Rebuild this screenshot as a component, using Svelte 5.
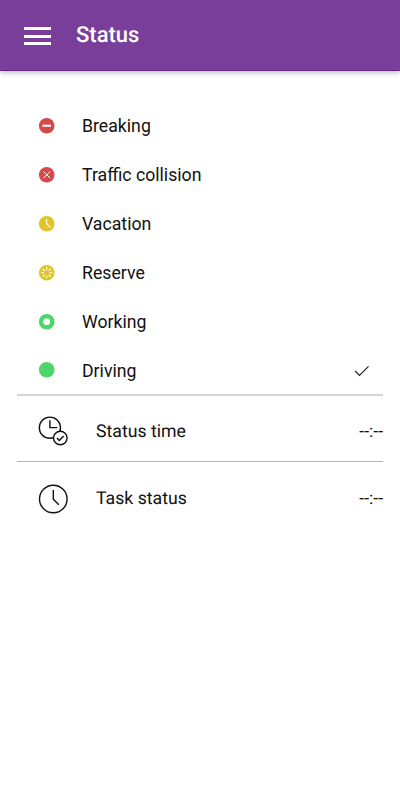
<script>
  // Available statuses
  const statuses = [
    { id: 'breaking', label: 'Breaking', color: '#d34a4b' },
    { id: 'collision', label: 'Traffic collision', color: '#d34a4b' },
    { id: 'vacation', label: 'Vacation', color: '#e0c527' },
    { id: 'reserve', label: 'Reserve', color: '#e0c527' },
    { id: 'working', label: 'Working', color: '#4bd667' },
    { id: 'driving', label: 'Driving', color: '#4bd667' }
  ];

  const rays = [0, 45, 90, 135, 180, 225, 270, 315];

  let selected = $state('driving');
  let statusTime = $state('--:--');
  let taskStatus = $state('--:--');
</script>

<div class="screen">
  <header class="app-bar">
    <button class="menu-button" aria-label="Menu">
      <span class="bar"></span>
      <span class="bar"></span>
      <span class="bar"></span>
    </button>
    <h1 class="title">Status</h1>
  </header>

  <main class="content">
    <div class="status-list">
      {#each statuses as status (status.id)}
        <button class="status-row" onclick={() => (selected = status.id)}>
          <svg class="dot" viewBox="0 0 16 16">
            <circle cx="7.7" cy="7.7" r="7.8" fill={status.color} />
            {#if status.id === 'breaking'}
              <path d="M3.4 7.7h8.6" stroke-width="2" />
            {:else if status.id === 'collision'}
              <path d="M4.5 4.5l6.6 6.6M11.1 4.5l-6.6 6.6" stroke-width="1" />
            {:else if status.id === 'vacation'}
              <path d="M7.6 2.7v5l4 4" stroke-width="1.1" />
            {:else if status.id === 'reserve'}
              {#each rays as angle}
                <path d="M7.7 2.1v2.9" stroke-width="1.1" transform="rotate({angle} 7.7 7.7)" />
              {/each}
            {:else if status.id === 'working'}
              <circle cx="7.7" cy="7.7" r="3.4" fill="#fff" />
            {/if}
          </svg>
          <span class="label">{status.label}</span>
          {#if selected === status.id}
            <svg class="check" viewBox="0 0 16 12">
              <path d="M1.2 6l4.3 4.4 9-9" />
            </svg>
          {/if}
        </button>
      {/each}
    </div>

    <div class="info-row thick">
      <svg class="info-icon" viewBox="0 0 30 30">
        <circle cx="11.9" cy="11.7" r="10.6" />
        <path d="M11.9 4.3v7.3h7.4" />
        <circle cx="22.3" cy="22" r="6.8" fill="#fff" />
        <path d="M18.9 22l2.4 2.4 4.3-4.5" />
      </svg>
      <span class="label">Status time</span>
      <span class="value">{statusTime}</span>
    </div>

    <div class="info-row">
      <svg class="info-icon" viewBox="0 0 30 30">
        <circle cx="15.3" cy="15" r="13.8" />
        <path d="M15.3 6v9.3l5.5 5.4" />
      </svg>
      <span class="label">Task status</span>
      <span class="value">{taskStatus}</span>
    </div>
  </main>
</div>

<style>
  :global(body) {
    background: #fff;
  }

  .screen {
    min-height: 800px;
    font-family: Roboto, sans-serif;
    color: #111;
    background: #fff;
    text-rendering: geometricPrecision;
  }

  .app-bar {
    display: flex;
    align-items: center;
    gap: 25px;
    height: 71px;
    padding: 1px 24px 0;
    box-sizing: border-box;
    background: #783e9a;
    border-bottom: 1px solid #672784;
    box-shadow: 0 2px 5px rgba(0, 0, 0, 0.25);
  }

  .menu-button {
    display: flex;
    flex-direction: column;
    gap: 4.5px;
    width: 27px;
    padding: 1px 0 0;
    border: none;
    background: none;
  }

  .bar {
    width: 27px;
    height: 3px;
    background: #fff;
  }

  .title {
    margin: 0;
    padding-top: 1px;
    font-size: 22px;
    font-weight: 500;
    line-height: 26px;
    color: #fff;
  }

  .content {
    padding: 30px 17px 0;
  }

  .status-row {
    display: flex;
    align-items: center;
    width: 100%;
    height: 48.9px;
    padding: 0 13px 0 22px;
    border: none;
    background: none;
    font: inherit;
    color: inherit;
    text-align: left;
  }

  .status-row .label {
    padding-top: 1.5px;
  }

  .dot {
    width: 16px;
    height: 16px;
    margin: 1px 27px 0 0;
    fill: none;
    stroke: #fff;
    overflow: visible;
  }

  .dot > circle {
    stroke: none;
  }

  .label {
    flex: 1;
    font-size: 17.7px;
    line-height: 20px;
  }

  .check {
    width: 16px;
    height: 12px;
    margin-top: 3px;
    fill: none;
    stroke: #222;
    stroke-width: 1.2;
  }

  .info-row {
    display: flex;
    align-items: center;
    height: 74px;
    box-sizing: border-box;
    padding-left: 21px;
    border-top: 1px solid #b8b8b8;
  }

  .info-row.thick {
    height: 67px;
    border-top: 2px solid #d6d6d6;
    padding-top: 6px;
  }

  .info-icon {
    width: 30px;
    height: 30px;
    margin-right: 28px;
    fill: none;
    stroke: #111;
    stroke-width: 1.4;
  }

  .thick .info-icon {
    margin-top: -1px;
  }

  .value {
    font-size: 17.6px;
    line-height: 20px;
  }
</style>
